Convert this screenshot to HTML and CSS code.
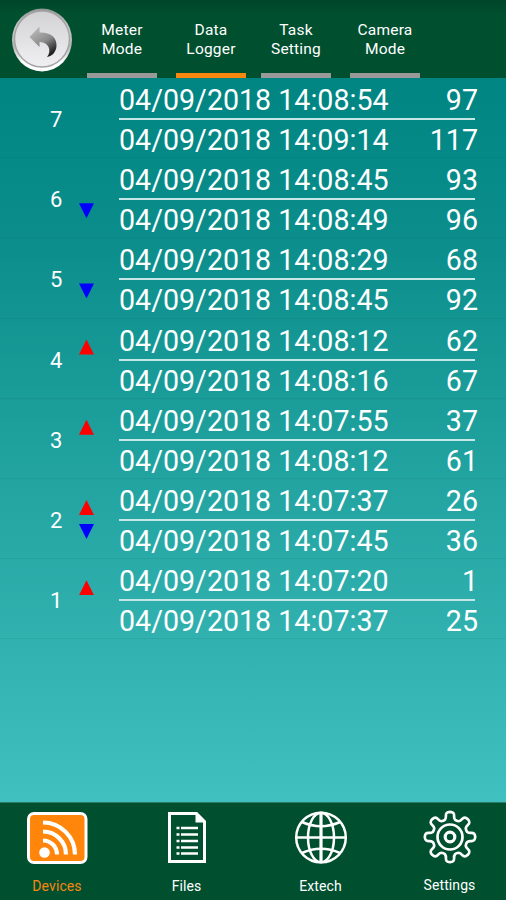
FILE: index.html
```html
<!DOCTYPE html>
<html lang="en">
<head>
    <meta charset="UTF-8">
    <meta name="viewport" content="width=device-width, initial-scale=1.0">
    <title>Data Logger</title>
    <link rel="stylesheet" href="styles.css">
</head>
<body>
    <header class="topbar">
        <button class="back-button" aria-label="Back">
            <svg width="64" height="66" viewBox="0 0 64 66">
                <defs>
                    <linearGradient id="face" x1="0" y1="0" x2="0" y2="1">
                        <stop offset="0" stop-color="#d2d2d4"/>
                        <stop offset="1" stop-color="#f0f0f2"/>
                    </linearGradient>
                    <linearGradient id="rim" x1="0" y1="0" x2="0" y2="1">
                        <stop offset="0" stop-color="#8e9390"/>
                        <stop offset="0.3" stop-color="#c9cbca"/>
                        <stop offset="0.6" stop-color="#b4b6b5"/>
                        <stop offset="0.85" stop-color="#ffffff"/>
                    </linearGradient>
                    <linearGradient id="arrow" x1="0" y1="0" x2="0.6" y2="1">
                        <stop offset="0" stop-color="#c4c4c4"/>
                        <stop offset="0.6" stop-color="#8c8c8c"/>
                        <stop offset="1" stop-color="#222"/>
                    </linearGradient>
                </defs>
                <ellipse cx="32" cy="33" rx="30" ry="31.5" fill="url(#rim)"/>
                <ellipse cx="32" cy="32" rx="27.5" ry="28" fill="url(#face)" stroke="#a5a5a8" stroke-width="1.5"/>
                <path d="M19.500 30L29.500 19.500V25.500C40 25 47 30 46.500 39C46 45 42.500 49 37 50C42 44 39 35 29.500 35V40Z" fill="url(#arrow)"/>
            </svg>
        </button>
        <nav class="tabs">
            <a class="tab">Meter<br>Mode</a>
            <a class="tab active">Data<br>Logger</a>
            <a class="tab">Task<br>Setting</a>
            <a class="tab">Camera<br>Mode</a>
        </nav>
    </header>

    <main class="log" id="log"></main>

    <footer class="bottombar">
        <a class="nav-item devices active">
            <svg width="62" height="54" viewBox="0 0 62 54">
                <rect x="2.500" y="2.500" width="57.500" height="49" rx="5.500" fill="#ff850b" stroke="#fff" stroke-width="3"/>
                <circle cx="18.500" cy="41.500" r="5.300" fill="#fff"/>
                <g fill="none" stroke="#fff" stroke-width="4.200">
                    <path d="M17 29.500A14 14 0 0 1 31 43.500"/>
                    <path d="M17 20.500A23 23 0 0 1 40 43.500"/>
                    <path d="M17 11.500A32 32 0 0 1 49 43.500"/>
                </g>
            </svg>
            <span>Devices</span>
        </a>
        <a class="nav-item files">
            <svg width="40" height="54" viewBox="0 0 40 54">
                <path d="M2.500 2.500H29.500L37.500 10.500V50.500H2.500Z" fill="none" stroke="#fff" stroke-width="3"/>
                <path d="M28.500 1L39 11.500H28.500Z" fill="#fff"/>
                <path d="M14 17H31M14 23.500H31M14 30H31M14 36.500H31M14 42.500H31" stroke="#fff" stroke-width="2.500"/>
                <path d="M9.500 17H12.500M9.500 23.500H12.500M9.500 30H12.500M9.500 36.500H12.500M9.500 42.500H12.500" stroke="#fff" stroke-width="2.500"/>
            </svg>
            <span>Files</span>
        </a>
        <a class="nav-item extech">
            <svg width="54" height="54" viewBox="0 0 54 54">
                <g fill="none" stroke="#fff" stroke-width="2.500">
                    <circle cx="27" cy="26.500" r="24.800"/>
                    <ellipse cx="27" cy="26.500" rx="13" ry="24.800"/>
                    <path d="M2 26.500H52"/>
                    <path d="M27 2V51" stroke-width="3.200"/>
                    <path d="M8 11Q27 19.500 46 11M8 42Q27 33.500 46 42"/>
                </g>
            </svg>
            <span>Extech</span>
        </a>
        <a class="nav-item settings">
            <svg width="54" height="54" viewBox="0 0 54 54">
                <g fill="none" stroke="#fff" stroke-width="2.700" stroke-linejoin="round">
                    <path id="gear"/>
                    <circle cx="27" cy="27" r="12.500"/>
                    <circle cx="27" cy="27" r="4.800" stroke-width="3.200"/>
                </g>
            </svg>
            <span>Settings</span>
        </a>
    </footer>

    <script>
        const records = [
            { id: 7, start: '14:08:54', end: '14:09:14', from: 97, to: 117 },
            { id: 6, start: '14:08:45', end: '14:08:49', from: 93, to: 96, down: true },
            { id: 5, start: '14:08:29', end: '14:08:45', from: 68, to: 92, down: true },
            { id: 4, start: '14:08:12', end: '14:08:16', from: 62, to: 67, up: true },
            { id: 3, start: '14:07:55', end: '14:08:12', from: 37, to: 61, up: true },
            { id: 2, start: '14:07:37', end: '14:07:45', from: 26, to: 36, up: true, down: true },
            { id: 1, start: '14:07:20', end: '14:07:37', from: 1, to: 25, up: true }
        ];

        document.getElementById('log').innerHTML = records.map(r => `
            <div class="record">
                <div class="record-id">${r.id}</div>
                <div class="alarms">
                    <i class="alarm ${r.up ? 'up' : ''}"></i>
                    <i class="alarm ${r.down ? 'down' : ''}"></i>
                </div>
                <div class="times">
                    <div class="line"><span>04/09/2018 ${r.start}</span><span>${r.from}</span></div>
                    <div class="line"><span>04/09/2018 ${r.end}</span><span>${r.to}</span></div>
                </div>
            </div>
        `).join('');

        // Eight rounded teeth around the centre
        function gearPath() {
            const point = (radius, deg) => {
                const a = deg * Math.PI / 180;
                return (27 + radius * Math.sin(a)).toFixed(2) + ' ' + (27 - radius * Math.cos(a)).toFixed(2);
            };
            let d = 'M' + point(18, -16);
            for (let t = 0; t < 360; t += 45) {
                d += `Q${point(19, t - 12)} ${point(21.5, t - 11)}`;
                d += `C${point(24.5, t - 10)} ${point(25.2, t - 7)} ${point(25.2, t)}`;
                d += `C${point(25.2, t + 7)} ${point(24.5, t + 10)} ${point(21.5, t + 11)}`;
                d += `Q${point(19, t + 12)} ${point(18, t + 16)}Q${point(17.2, t + 22.5)} ${point(18, t + 29)}`;
            }
            return d + 'Z';
        }
        document.getElementById('gear').setAttribute('d', gearPath());
    </script>
</body>
</html>
```
FILE: styles.css
```css
* {
    box-sizing: border-box;
}
body {
    font-family: Roboto, 'Liberation Sans', sans-serif;
    margin: 0;
    height: 900px;
    display: flex;
    flex-direction: column;
    overflow: hidden;
    color: #fff;
    background: #00502f;
}
.topbar {
    display: flex;
    height: 78px;
    padding-left: 10px;
    background: linear-gradient(#00452a, #00502f 14px);
}
.back-button {
    width: 64px;
    height: 66px;
    margin: 7px 13px 0 0;
    padding: 0;
    border: none;
    background: none;
    cursor: pointer;
}
.back-button svg {
    display: block;
}
.tabs {
    display: flex;
    gap: 19px;
}
.tab {
    width: 70px;
    padding-top: 21px;
    border-bottom: 5px solid #999;
    font-size: 15.5px;
    line-height: 19px;
    letter-spacing: 0.2px;
    text-align: center;
}
.tab:nth-child(3) {
    margin-left: -4px;
}
.tab.active {
    border-color: #f7870f;
}
.log {
    flex: 1;
    background: linear-gradient(#008583, #0b8e8b 22%, #40c0be 100%);
}
.record {
    display: flex;
    height: 80.2px;
    border-bottom: 1px solid rgba(0, 80, 80, 0.09);
}
.record-id {
    width: 57px;
    padding-left: 50px;
    font-size: 22px;
    line-height: 84.5px;
}
.alarms {
    width: 62px;
    padding: 21px 0 0 22px;
}
.alarm {
    display: block;
    width: 15px;
    height: 15px;
    margin-bottom: 9px;
}
.alarm.up {
    background: #f00;
    clip-path: polygon(50% 0, 100% 100%, 0 100%);
}
.alarm.down {
    background: #00f;
    clip-path: polygon(0 0, 100% 0, 50% 100%);
}
.times {
    width: 359px;
}
.line {
    display: flex;
    justify-content: space-between;
    height: 40px;
    font-size: 28.6px;
    line-height: 45px;
}
.line:first-child {
    height: 42px;
    background: linear-gradient(#c5e7e6, #c5e7e6) 0 100% / 356px 2px no-repeat;
}
.line:last-child {
    line-height: 41px;
}
.bottombar {
    display: flex;
    height: 98px;
    border-top: 1px solid #2a7c68;
}
.nav-item {
    display: flex;
    flex-direction: column;
    align-items: center;
    padding-top: 8px;
    font-size: 14px;
    line-height: 20px;
}
.nav-item span {
    margin-top: 11px;
    letter-spacing: 0.1px;
}
.nav-item.active {
    color: #f7870f;
}
.devices {
    width: 114px;
}
.files {
    width: 145px;
}
.extech {
    width: 123px;
}
.settings {
    width: 124px;
    padding: 7px 0 0 11px;
}
```
